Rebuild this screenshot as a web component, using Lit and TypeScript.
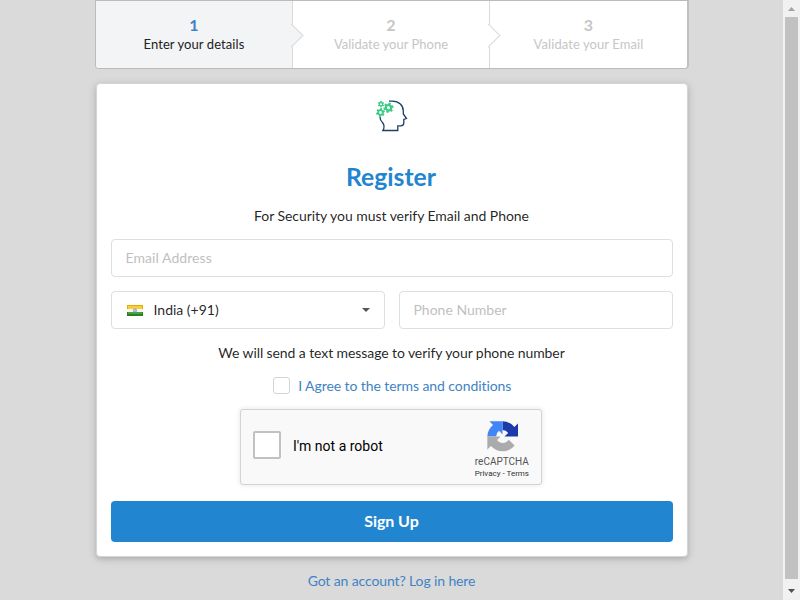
import { LitElement, html, css, svg } from "lit";
import { customElement } from "lit/decorators.js";

const gear = (x: number, y: number, r: number, turn = 0) => svg`
  <g transform="translate(${x} ${y}) rotate(${turn})">
    <circle r=${r * 0.58} fill="none" stroke="#3ccb85" stroke-width=${r * 0.46}></circle>
    ${[0, 60, 120, 180, 240, 300].map(
      (a) => svg`<rect x=${-r * 0.26} y=${-r * 1.1} width=${r * 0.52} height=${r * 0.5}
        fill="#3ccb85" transform="rotate(${a})"></rect>`
    )}
  </g>`;

@customElement("app-root")
export class AppRoot extends LitElement {
  static styles = css`
    :host {
      display: flex;
      width: 800px;
      height: 600px;
      overflow: hidden;
      background: #dadada;
      font: 14px/20px Lato, sans-serif;
      color: rgba(0, 0, 0, 0.87);
    }
    * { box-sizing: border-box; }
    .page { width: 783px; padding-left: 95px; }
    .steps {
      display: flex;
      width: 594px;
      height: 69px;
      background: #fff;
      border: 1px solid #bbb;
      border-right-width: 2px;
      border-right-color: #c0c0c0;
      border-radius: 0 0 4px 4px;
    }
    .step {
      position: relative;
      width: 197px;
      padding-top: 13px;
      text-align: center;
      border-right: 1px solid #d9dadb;
      color: #c6c6c6;
      font-size: 13px;
      line-height: 17px;
      letter-spacing: 0.08px;
    }
    .step:last-child { border-right: 0; }
    .step:not(:last-child)::after {
      content: "";
      position: absolute;
      z-index: 1;
      right: -8px;
      top: 26px;
      width: 16px;
      height: 16px;
      background: inherit;
      border: solid #d9dadb;
      border-width: 1px 1px 0 0;
      transform: rotate(45deg);
    }
    .step b { display: block; margin-bottom: 1px; font-size: 16px; line-height: 21px; font-weight: 700; }
    .active { background: #f3f4f5; color: #222; border-bottom-left-radius: 3px; }
    .active b { color: #4183c4; }
    .white { background: #fff; letter-spacing: 0; }
    .card {
      display: flex;
      flex-direction: column;
      align-items: center;
      width: 592px;
      height: 474px;
      margin: 14px 0 0 1px;
      padding: 16px 14px 14px;
      background: #fff;
      border: 1px solid #d4d4d5;
      border-radius: 4px;
      box-shadow: 0 2px 4px rgba(34, 36, 38, 0.12), 0 2px 10px rgba(34, 36, 38, 0.15);
    }
    .logo { display: block; width: 32px; height: 32px; }
    h1 { margin: 29px 2px 0 0; font-size: 24.7px; line-height: 32px; font-weight: 700; color: #2185d0; }
    .note { margin: 13px 1px 0 0; letter-spacing: -0.05px; }
    .field {
      width: 274px;
      height: 38px;
      padding: 8px 13.5px;
      border: 1px solid #dedede;
      border-radius: 4px;
      color: #bfbfbf;
      background: #fff;
    }
    .email { width: 100%; margin-top: 13px; letter-spacing: 0.06px; }
    .row { display: flex; gap: 14px; margin-top: 14px; }
    .select { display: flex; align-items: center; color: rgba(0, 0, 0, 0.87); padding: 0 14px 0 15px; }
    .flag { width: 16px; height: 11px; margin-right: 10.5px; }
    .caret {
      margin-left: auto;
      border: solid transparent;
      border-width: 4px 4px 0;
      border-top-color: #555;
    }
    .sms { margin: 14px 1px 0 0; letter-spacing: -0.09px; }
    .agree {
      display: flex;
      align-items: center;
      gap: 8.5px;
      height: 20px;
      margin-top: 13px;
      color: #4183c4;
      letter-spacing: -0.08px;
    }
    .box { width: 17px; height: 17px; margin-top: -1px; border: 1px solid #d4d4d5; border-radius: 3px; }
    .captcha {
      display: flex;
      align-items: center;
      width: 302px;
      height: 76px;
      margin: 13px 2px 0 0;
      padding-left: 12px;
      border: 1px solid #d3d3d3;
      border-radius: 3px;
      background: #f9f9f9;
      box-shadow: 0 0 4px 1px rgba(0, 0, 0, 0.08);
      font-family: Roboto, sans-serif;
      color: #000;
    }
    .robot { margin-top: -2px; }
    .tick {
      width: 28px;
      height: 28px;
      margin: -4px 12px 0 0;
      border: 2px solid #c1c1c1;
      border-radius: 2px;
      background: #fff;
    }
    .brand {
      display: flex;
      flex-direction: column;
      align-items: center;
      margin: 0 12px 0 auto;
      padding-top: 7px;
      color: #555;
      font-size: 10px;
      line-height: 12px;
    }
    .brand svg { width: 31px; height: 31px; margin: 0 0 4px 1px; }
    .brand small { font-size: 8px; line-height: 12px; color: #333; }
    .button {
      width: 100%;
      height: 41px;
      margin-top: 16px;
      padding-right: 1px;
      border-radius: 4px;
      background: #2185d0;
      color: #fff;
      text-align: center;
      font-size: 16px;
      line-height: 40px;
      font-weight: 700;
      letter-spacing: -0.08px;
    }
    .login {
      width: 593px;
      margin: 14px 0 0;
      text-align: center;
      color: #4183c4;
      letter-spacing: -0.12px;
    }
    .bar {
      display: flex;
      flex-direction: column;
      align-items: center;
      width: 17px;
      background: #f1f1f1;
    }
    .thumb { width: 13px; height: 562px; background: #c1c1c1; }
    .arrow { width: 17px; height: 17px; }
    .bar .arrow:last-child { margin-top: 3px; }
  `;

  render() {
    return html`
      <div class="page">
        <div class="steps">
          <div class="step active"><b>1</b>Enter your details</div>
          <div class="step white"><b>2</b>Validate your Phone</div>
          <div class="step"><b>3</b>Validate your Email</div>
        </div>
        <div class="card">
          <svg class="logo" viewBox="0 0 32 32">
            <path d="M13 1.200h3.500C23 1.200 27.300 5.500 27.300 11v3l3.200 4.500-2.700 1v3.500c0 2-1 2.800-3 2.800h-3v4.700H6.800c2-3 2-5-.3-8C4.700 21 4 19 4 17"
              fill="none" stroke="#1c4061" stroke-width="1.3"></path>
            ${gear(5, 4.2, 2.9)} ${gear(12.5, 7.7, 4.6, 15)} ${gear(4.5, 12.5, 4, 10)}
          </svg>
          <h1>Register</h1>
          <div class="note">For Security you must verify Email and Phone</div>
          <div class="field email">Email Address</div>
          <div class="row">
            <div class="field select">
              <svg class="flag" viewBox="0 0 16 11">
                <path fill="#e8a900" d="M0 0h16v4H0z"></path>
                <path fill="#f9ce3c" d="M1 1h14v3H1z"></path>
                <path fill="#f5f5f5" d="M0 4h16v3H0z"></path>
                <path fill="#248326" d="M0 7h16v4H0z"></path>
                <path fill="#4ba03d" d="M1 7h14v2H1z"></path>
                <circle cx="8" cy="5.5" r="1.6" fill="#b8c9ec" stroke="#7893cd" stroke-width=".8"></circle>
              </svg>
              India (+91)<span class="caret"></span>
            </div>
            <div class="field">Phone Number</div>
          </div>
          <div class="sms">We will send a text message to verify your phone number</div>
          <div class="agree"><span class="box"></span>I Agree to the terms and conditions</div>
          <div class="captcha">
            <span class="tick"></span><span class="robot">I'm not a robot</span>
            <div class="brand">
              <svg viewBox="0 0 64 64">
                <path d="M64 32V5l-7.500 7.400A31.900 31.900 0 0 0 32 .7v18.100a14.700 14.700 0 0 1 11.700 6.100L36 32z" fill="#1c3aa9"></path>
                <path d="M32 .7H5l7.400 7.400A31.900 31.900 0 0 0 .7 32h18.100a14.700 14.700 0 0 1 6.100-11.700L32 28z" fill="#4285f4"></path>
                <path d="M.7 32v27l7.400-7.400A31.900 31.900 0 0 0 57 50.500L45 38.500a14.700 14.700 0 0 1-24.200.7L28 32z" fill="#ababab"></path>
              </svg>
              <span>reCAPTCHA</span><small>Privacy - Terms</small>
            </div>
          </div>
          <div class="button">Sign Up</div>
        </div>
        <div class="login">Got an account? Log in here</div>
      </div>
      <div class="bar">
        <svg class="arrow" viewBox="0 0 17 17"><path d="M5 11l3.500-4 3.500 4z" fill="#a3a3a3"></path></svg>
        <div class="thumb"></div>
        <svg class="arrow" viewBox="0 0 17 17"><path d="M5 7l3.500 4L12 7z" fill="#505050"></path></svg>
      </div>
    `;
  }
}
